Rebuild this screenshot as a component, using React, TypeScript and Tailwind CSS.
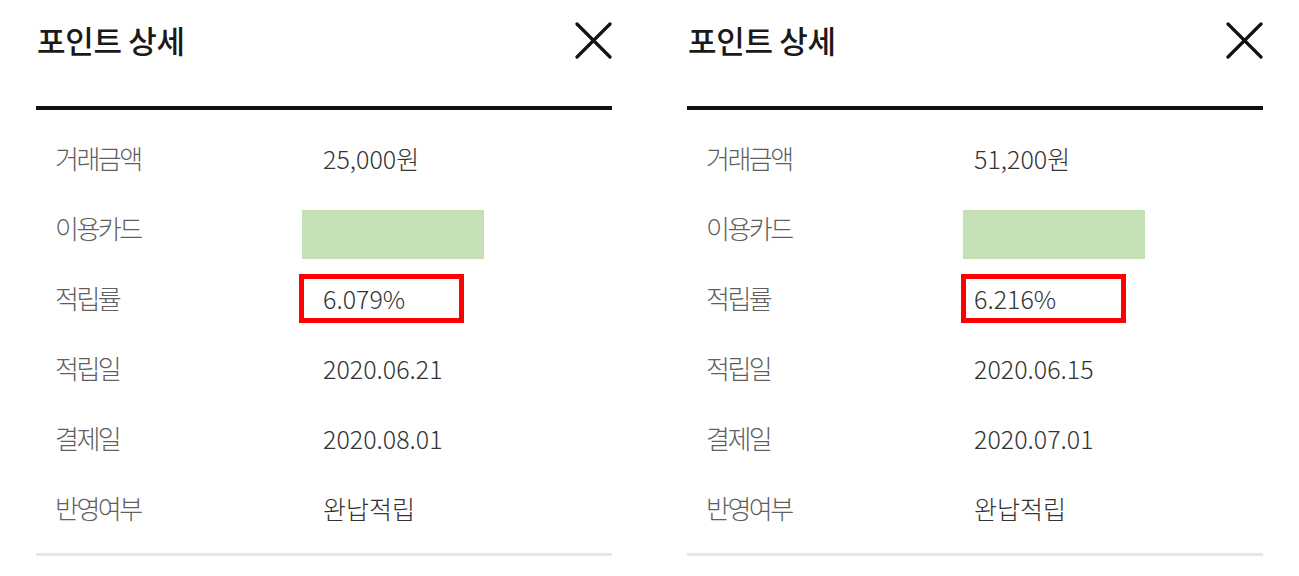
import React from 'react';

type Row = { label: string; value?: string; kind?: 'card' | 'rate' };

interface PanelProps {
    rows: Row[];
    cardShift: string;
    rateShift: string;
    ratePad: string;
}

const font = { fontFamily: '"Noto Sans CJK KR", "Noto Sans", sans-serif' };

function CloseIcon() {
    return (
        <svg width="37" height="37" viewBox="0 0 37 37" fill="none" stroke="#111" strokeWidth="3.2" strokeLinecap="round">
            <line x1="2" y1="2" x2="35" y2="35" />
            <line x1="35" y1="2" x2="2" y2="35" />
        </svg>
    );
}

function DetailPanel({ rows, cardShift, rateShift, ratePad }: PanelProps) {
    return (
        <div className="w-[576px] shrink-0">
            {/* header */}
            <div className="h-[80px] flex items-center justify-between">
                <h1 className="text-[31px] font-medium text-[#1a1a1a] tracking-[-0.3px] pl-[1px]">포인트 상세</h1>
                <CloseIcon />
            </div>
            <div className="mt-[26px] h-[4px] bg-[#111]" />

            <div className="mt-[13px]">
                {rows.map((r) => (
                    <div key={r.label} className="h-[70px] flex items-center">
                        <div className="w-[287px] pl-[19px] text-[26px] font-light text-[#5f5f5f] tracking-[-2.5px] leading-none">{r.label}</div>
                        {r.kind === 'card' && (
                            <div className={`${cardShift} self-start mt-[17px] w-[182px] h-[49px] bg-[#c5e0b4]`} />
                        )}
                        {r.kind === 'rate' && (
                            <div className={`${rateShift} ${ratePad} w-[165px] h-[49px] border-[5px] border-[#ff0000] flex items-center text-[25px] font-light text-[#333] leading-none`}>
                                {r.value}
                            </div>
                        )}
                        {!r.kind && (
                            <div className="text-[25px] font-light text-[#333] leading-none">{r.value}</div>
                        )}
                    </div>
                ))}
            </div>

            <div className="mt-[10px] h-[3px] bg-[#e6e6e6]" />
        </div>
    );
}

export default function App() {
    const left: Row[] = [
        { label: '거래금액', value: '25,000원' },
        { label: '이용카드', kind: 'card' },
        { label: '적립률', value: '6.079%', kind: 'rate' },
        { label: '적립일', value: '2020.06.21' },
        { label: '결제일', value: '2020.08.01' },
        { label: '반영여부', value: '완납적립' },
    ];
    const right: Row[] = [
        { label: '거래금액', value: '51,200원' },
        { label: '이용카드', kind: 'card' },
        { label: '적립률', value: '6.216%', kind: 'rate' },
        { label: '적립일', value: '2020.06.15' },
        { label: '결제일', value: '2020.07.01' },
        { label: '반영여부', value: '완납적립' },
    ];

    return (
        <div className="w-[1299px] h-[576px] bg-white flex gap-[75px] pl-[36px] overflow-hidden" style={font}>
            <DetailPanel rows={left} cardShift="-ml-[21px]" rateShift="-ml-[24px]" ratePad="pl-[19px]" />
            <DetailPanel rows={right} cardShift="-ml-[11px]" rateShift="-ml-[13px]" ratePad="pl-[8px]" />
        </div>
    );
}
